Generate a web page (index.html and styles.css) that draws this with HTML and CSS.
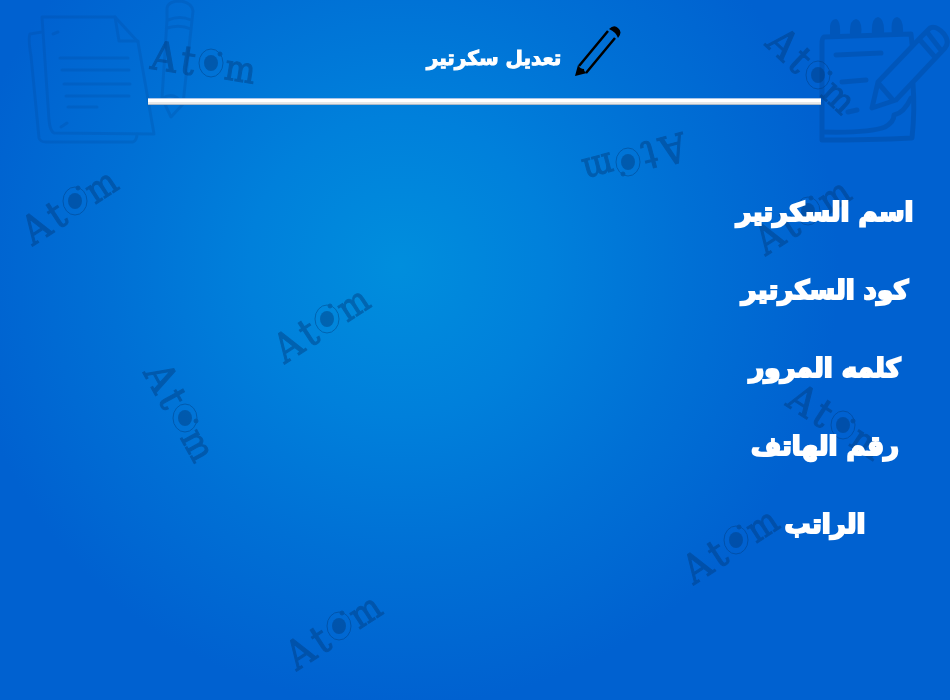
FILE: index.html
```html
<!DOCTYPE html>
<html lang="ar" dir="rtl">
<head>
<meta charset="utf-8">
<title>تعديل سكرتير</title>
<link rel="stylesheet" href="styles.css">
</head>
<body>
<svg class="backdrop" viewBox="0 0 950 700" preserveAspectRatio="xMidYMid slice" direction="ltr" aria-hidden="true">
  <defs>
    <g id="word">
      <text class="initial" x="-47" y="15">A</text>
      <text class="initial" x="-23" y="15">t</text>
      <text x="30" y="14">m</text>
    </g>
    <g id="ring">
      <ellipse class="orbit" rx="12" ry="14"/>
      <ellipse class="core" rx="7" ry="8"/>
    </g>
  </defs>

  <g class="sketch sketch-faint">
    <path d="M42 17H115L138 42L154 134L54 133Q50 131 49 120Z"/>
    <path d="M115 17L119 41H138M42 32L30 34Q28 38 31 56L39 138Q40 142 46 142L133 142Q137 140 137 134"/>
    <path d="M60 58H128M62 70H129M64 84H130M66 96H129M68 107H97M61 127L67 123M53 34L58 32"/>
    <path d="M167 20V8Q168 1 181 1Q192 3 193 11L183 104L171 117L162 98ZM168 20Q180 15 191 20M167 28Q180 24 191 29M163 98Q174 91 183 104"/>
  </g>
  <g class="sketch sketch-bold">
    <path d="M912 44L911 34L824 37Q822 38 822 44V140Q870 140 912 138Q915 110 913 84"/>
    <path d="M824 132Q870 133 885 127Q894 122 894 115Q904 113 911 98M836 55L881 53M842 82L866 80M848 112L857 110"/>
    <path d="M878 82L922 36L930 28Q936 25 944 34Q950 42 945 48L896 100L872 108ZM879 84L892 99M920 40L934 56M927 32L940 49"/>
    <path class="loops" d="M831 36V26Q832 20 836 20Q840 22 839 36ZM851 35Q850 21 856 20Q862 22 860 35ZM873 34Q872 19 878 18Q884 20 883 34ZM893 34Q891 19 897 18Q903 20 902 34Z"/>
  </g>

  <g class="marks">
    <g transform="translate(211 63)"><use href="#word" transform="rotate(9)"/><use href="#ring"/><circle cx="9" cy="-9" r="2"/></g>
    <g transform="translate(818 75)"><use href="#word" transform="rotate(43)"/><use href="#ring"/><circle cx="12" cy="-2" r="2"/></g>
    <g transform="translate(628 162)"><use href="#word" transform="rotate(165)"/><use href="#ring"/><circle cx="-5" cy="12" r="2"/></g>
    <g transform="translate(75 201)"><use href="#word" transform="rotate(-33)"/><use href="#ring"/><circle cx="3" cy="-13" r="2"/></g>
    <g transform="translate(327 319)"><use href="#word" transform="rotate(-33)"/><use href="#ring"/><circle cx="3" cy="-13" r="2"/></g>
    <g transform="translate(185 418)"><use href="#word" transform="rotate(61)"/><use href="#ring"/><circle cx="11" cy="3" r="2"/></g>
    <g transform="translate(808 211)"><use href="#word" transform="rotate(-33)"/><use href="#ring"/><circle cx="3" cy="-13" r="2"/></g>
    <g transform="translate(843 425)"><use href="#word" transform="rotate(33)"/><use href="#ring"/><circle cx="10" cy="-4" r="2"/></g>
    <g transform="translate(736 540)"><use href="#word" transform="rotate(-33)"/><use href="#ring"/><circle cx="3" cy="-13" r="2"/></g>
    <g transform="translate(339 626)"><use href="#word" transform="rotate(-33)"/><use href="#ring"/><circle cx="3" cy="-13" r="2"/></g>
  </g>
</svg>

<main class="page">
  <header class="header">
    <svg class="pencil" viewBox="0 0 46 52" aria-hidden="true">
      <path d="M33 6L4 41M40 13L11 48" fill="none" stroke="#000" stroke-width="2.5"/>
      <path d="M0 51L3 40Q5 44 9 44Q9 47 12 48Z"/>
      <path d="M34 4Q39-1 43 3Q48 7 43 13Q41 7 34 4Z"/>
    </svg>
    <h1 class="title">تعديل سكرتير</h1>
  </header>
  <hr class="rule">
  <ul class="fields">
    <li>اسم السكرتير</li>
    <li>كود السكرتير</li>
    <li>كلمه المرور</li>
    <li>رقم الهاتف</li>
    <li>الراتب</li>
  </ul>
</main>
</body>
</html>
```
FILE: styles.css
```css
* {
  box-sizing: border-box;
}

body {
  margin: 0;
  min-height: 100vh;
  position: relative;
  color: #fff;
  font-family: "DejaVu Sans", sans-serif;
  font-weight: 700;
  background: radial-gradient(circle at 42% 38%, #008edd 0, #0080db 150px, #0070d5 290px, #0061d0 440px);
}

.backdrop {
  position: absolute;
  inset: 0;
  width: 100%;
  height: 100%;
}

.marks {
  fill: #003c7c;
  stroke: #003c7c;
  stroke-width: 1;
  opacity: 0.45;
  font-family: "DejaVu Serif Condensed", "DejaVu Serif", serif;
  font-size: 36px;
  font-weight: 400;
  text-anchor: middle;
}

.initial {
  font-size: 40px;
}

.orbit {
  fill: none;
}

.core {
  stroke: none;
}

.sketch {
  fill: none;
  stroke: #004494;
  stroke-linecap: round;
  stroke-linejoin: round;
}

.sketch-faint {
  stroke-width: 3;
  opacity: 0.2;
}

.sketch-bold {
  stroke-width: 5;
  opacity: 0.35;
}

.loops {
  fill: #004494;
  stroke-width: 2;
}

.page {
  position: relative;
}

.header {
  display: flex;
  justify-content: center;
  align-items: flex-end;
  gap: 14px;
  padding: 24px 0 20px;
  margin-left: 98px;
}

.pencil {
  width: 46px;
  height: 54px;
}

.title {
  margin: 0;
  font-size: 20px;
  line-height: 40px;
  -webkit-text-stroke: 1px #fff;
}

.rule {
  height: 7px;
  margin: 0 129px 0 148px;
  border: 0;
  background: linear-gradient(#a8c4e8 0 1px, #fff 1px 4px, #e8e8e8 4px 6px, #a9b8c8 6px);
}

.fields {
  display: grid;
  grid-auto-rows: 78px;
  align-items: center;
  width: 250px;
  margin: 68px 0 0;
  padding: 0;
  list-style: none;
  text-align: center;
  font-size: 26px;
  line-height: 40px;
  -webkit-text-stroke: 2px #fff;
}
```
